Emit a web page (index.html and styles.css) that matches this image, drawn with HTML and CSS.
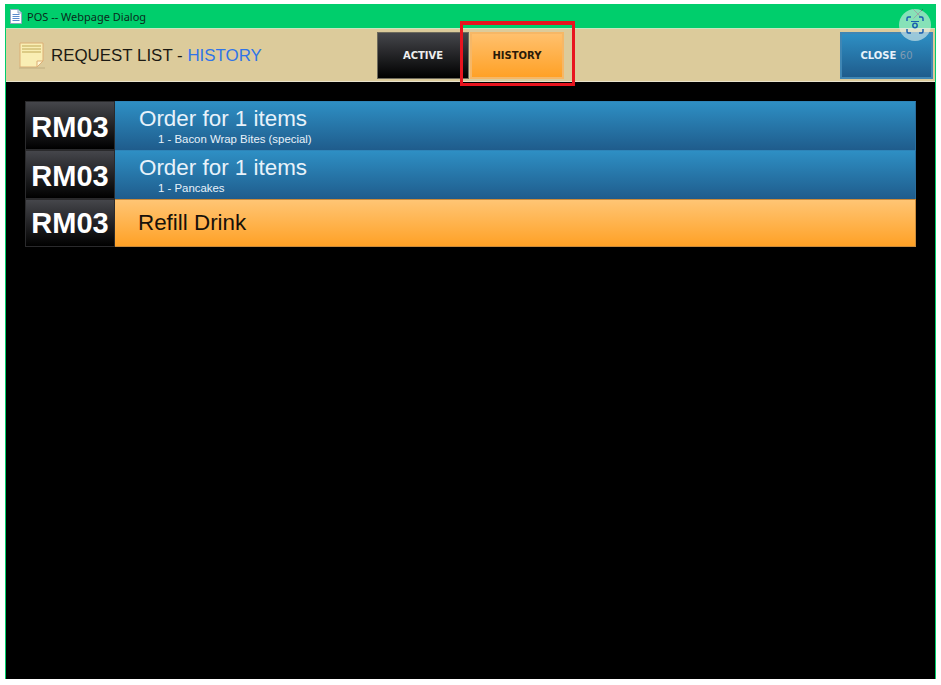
FILE: index.html
```html
<!DOCTYPE html>
<html lang="en">
<head>
  <meta charset="UTF-8">
  <title>POS -- Webpage Dialog</title>
  <link rel="stylesheet" href="styles.css">
</head>
<body>
  <div class="window">
    <div class="titlebar">
      <svg class="doc-icon" width="12" height="15" viewBox="0 0 12 15">
        <path d="M.5.5h7.500l3.500 3.500v10.500h-11z" fill="#fff" stroke="#8fa6c4"/>
        <path d="M8 .5v3.500h3.500" fill="#dbe6f3" stroke="#8fa6c4"/>
        <path d="M2.500 5.500h7M2.500 7.500h7M2.500 9.500h7M2.500 11.500h7" stroke="#5a8ccc"/>
      </svg>
      <span class="title-text">POS -- Webpage Dialog</span>
      <svg class="close-x" width="10" height="10" viewBox="0 0 10 10">
        <path d="M.5.5l9 9M9.500.5l-9 9" stroke="#33403a" stroke-width="1"/>
      </svg>
    </div>

    <div class="header">
      <div class="heading">
        <svg class="note-icon" width="26" height="27" viewBox="0 0 26 27">
          <path d="M1 1h23v18l-6 6H1z" fill="#f9eeb4" stroke="#dcae74"/>
          <path d="M3 4h19M3 7h19M3 10h19" stroke="#dccb85" stroke-width="2"/>
          <path d="M18 25v-6h6z" fill="#fff6d4" stroke="#dcae74"/>
          <path d="M0 26h26" stroke="#bfae80"/>
        </svg>
        <span class="heading-text">REQUEST LIST - <span class="heading-sub">HISTORY</span></span>
      </div>
      <div class="tabs">
        <button class="btn btn-dark">ACTIVE</button>
        <button class="btn btn-orange">HISTORY</button>
      </div>
      <button class="btn btn-blue btn-close">CLOSE <span class="countdown">60</span></button>
    </div>

    <div class="content">
      <div class="row">
        <div class="room">RM03</div>
        <div class="request request-blue">
          <div class="request-title">Order for 1 items</div>
          <div class="request-item">1 - Bacon Wrap Bites (special)</div>
        </div>
      </div>
      <div class="row">
        <div class="room">RM03</div>
        <div class="request request-blue">
          <div class="request-title">Order for 1 items</div>
          <div class="request-item">1 - Pancakes</div>
        </div>
      </div>
      <div class="row row-short">
        <div class="room">RM03</div>
        <div class="request request-orange">
          <div class="request-title">Refill Drink</div>
        </div>
      </div>
    </div>
  </div>

  <!-- red box drawn over the screenshot -->
  <div class="highlight"></div>

  <!-- floating capture button -->
  <div class="capture">
    <svg width="18" height="18" viewBox="0 0 18 18" fill="none" stroke="#1a5fb0" stroke-width="1.500">
      <path d="M1 5V2.500A1.500 1.500 0 0 1 2.500 1H5M13 1h2.500A1.500 1.500 0 0 1 17 2.500V5M17 13v2.500a1.500 1.500 0 0 1-1.500 1.500H13M5 17H2.500A1.500 1.500 0 0 1 1 15.500V13"/>
      <circle cx="9" cy="9.500" r="2.200"/>
      <path d="M5 5.500h8" stroke-width="1"/>
    </svg>
  </div>
</body>
</html>
```

FILE: styles.css
```css
html, body {
  margin: 0;
  padding: 0;
  height: 100%;
}
body {
  background: #fff;
  font-family: "Liberation Sans", Arial, sans-serif;
  padding: 4px 5px 5px 5px;
  box-sizing: border-box;
  overflow: hidden;
}
.window {
  height: 675px;
  width: 931px;
  display: flex;
  flex-direction: column;
  border-left: 1px solid #00ce6c;
  border-right: 1px solid #00ce6c;
  box-sizing: border-box;
  background: #000;
}
.titlebar {
  height: 24px;
  margin: 0 -1px;
  background: #00ce6c;
  display: flex;
  align-items: center;
  padding: 0 13px 0 5px;
  gap: 5px;
}
.title-text {
  font-family: "Noto Sans", sans-serif;
  font-size: 11px;
  color: #0b2a1c;
}
.close-x {
  margin-left: auto;
  margin-top: -4px;
}
.header {
  height: 54px;
  box-sizing: border-box;
  background: #dccb9b;
  border-top: 1px solid #c8e6c0;
  border-bottom: 1px solid #e8e2cc;
  display: flex;
  align-items: center;
  padding: 0 2px 0 13px;
}
.heading {
  width: 358px;
  display: flex;
  align-items: center;
  gap: 6px;
}
.heading-text {
  font-size: 16.9px;
  color: #1c1a14;
  padding-top: 1px;
}
.heading-sub {
  color: #2f74e8;
}
.tabs {
  display: flex;
  gap: 1px;
  margin-right: auto;
}
.btn {
  width: 93px;
  height: 47px;
  box-sizing: border-box;
  font-family: "DejaVu Sans", sans-serif;
  font-size: 10px;
  font-weight: bold;
  padding: 0;
}
.btn-dark {
  width: 92px;
  color: #eee;
  background: linear-gradient(#45464b, #000);
  border: 1px solid #6d6a5c;
}
.btn-orange {
  width: 94px;
  color: #2a1a08;
  background: linear-gradient(#ffc06d, #ffa126);
  border: 2px solid #f6b766;
}
.btn-blue {
  color: #e8f2fa;
  background: linear-gradient(#2e8fc4, #1f5c8c);
  border: 2px solid #3f86b4;
}
.countdown {
  color: #7f9bb2;
  font-weight: normal;
}
.content {
  flex: 1;
  padding: 19px 19px 0 19px;
}
.row {
  display: flex;
  height: 49px;
}
.row-short {
  height: 48px;
}
.room {
  width: 90px;
  box-sizing: border-box;
  display: flex;
  align-items: center;
  justify-content: center;
  padding-top: 3px;
  font-size: 29px;
  font-weight: bold;
  color: #fff;
  background: linear-gradient(#45464b, #000);
  border: 1px solid #2a2a2c;
}
.row-short .room {
  padding-top: 0;
}
.request {
  flex: 1;
  box-sizing: border-box;
  padding-left: 24px;
  display: flex;
  flex-direction: column;
  justify-content: center;
}
.request-blue {
  gap: 2px;
  color: #e8f2fa;
  background: linear-gradient(#2e8fc4, #1f5c8c);
  border-top: 1px solid #2e84b8;
  border-right: 1px solid #2a6d9c;
}
.request-orange {
  padding-left: 23px;
  padding-bottom: 2px;
  color: #17110a;
  background: linear-gradient(#ffc574, #ffa126);
  border: 1px solid #c98a3a;
  border-left: none;
}
.request-title {
  font-size: 22.4px;
  line-height: 25px;
}
.request-item {
  font-size: 11.4px;
  line-height: 13px;
  padding-left: 19px;
}
.highlight {
  position: absolute;
  left: 460px;
  top: 21px;
  width: 115px;
  height: 65px;
  box-sizing: border-box;
  border: 3px solid #e8141e;
  border-top-width: 4px;
}
.capture {
  position: absolute;
  left: 899px;
  top: 9px;
  width: 32px;
  height: 32px;
  border-radius: 50%;
  background: rgba(225, 240, 235, 0.6);
  display: flex;
  align-items: center;
  justify-content: center;
}
```
